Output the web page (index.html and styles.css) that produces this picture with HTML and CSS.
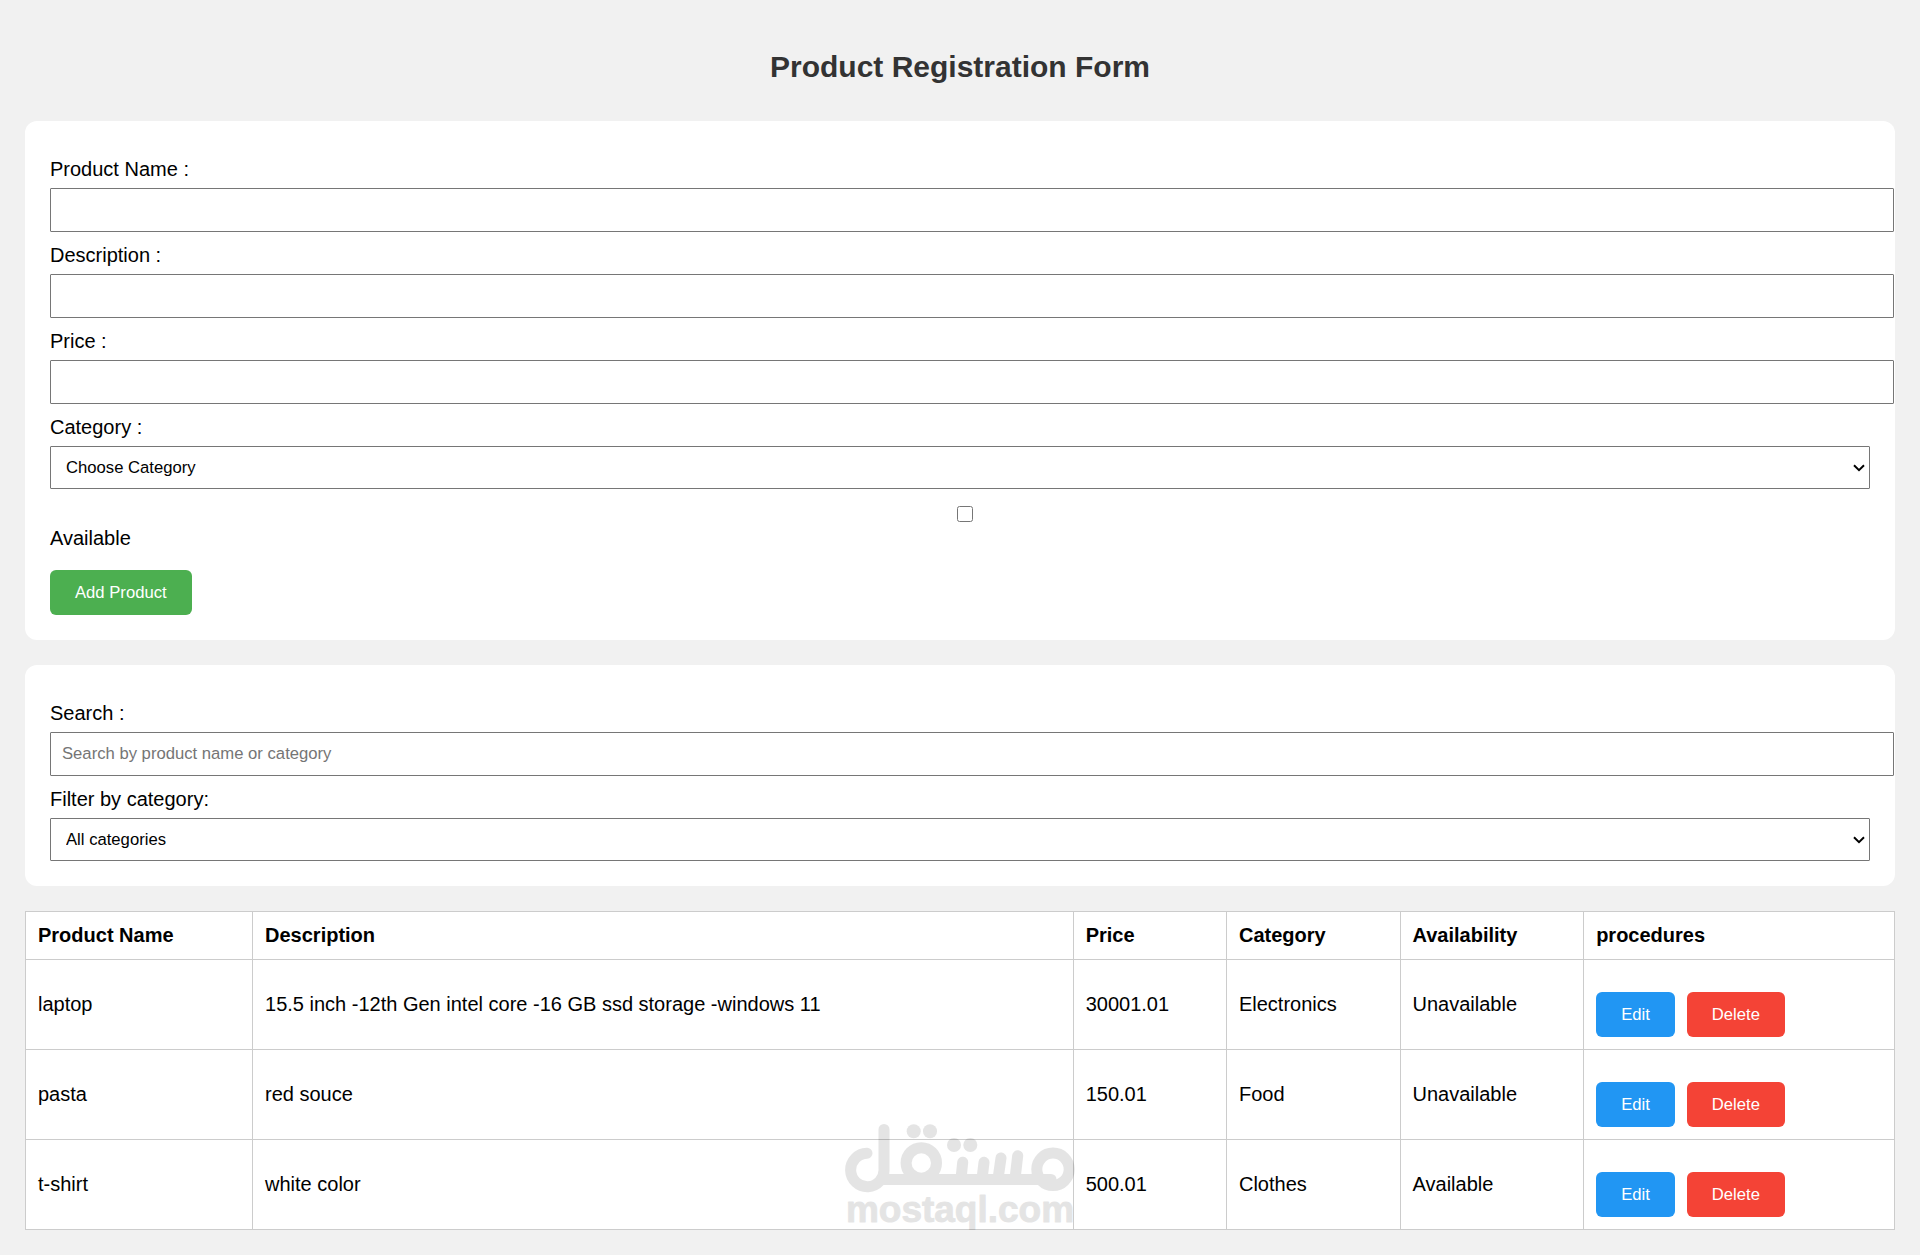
FILE: index.html
```html
<!DOCTYPE html>
<html lang="en">
<head>
    <meta charset="UTF-8">
    <meta name="viewport" content="width=device-width, initial-scale=1.0">
    <title>Product Registration Form</title>
    <link rel="stylesheet" href="styles.css">
</head>
<body>
    <h2>Product Registration Form</h2>

    <form id="productForm" class="card">
        <label for="productName">Product Name :</label>
        <input type="text" id="productName" name="productName" required>

        <label for="description">Description :</label>
        <input type="text" id="description" name="description" required>

        <label for="price">Price :</label>
        <input type="text" id="price" name="price" inputmode="decimal" required>

        <label for="category">Category :</label>
        <select id="category" name="category" required>
            <option value="">Choose Category</option>
            <option value="Electronics">Electronics</option>
            <option value="Food">Food</option>
            <option value="Clothes">Clothes</option>
        </select>

        <input type="checkbox" id="available" name="available">
        <label for="available" class="check-label">Available</label>

        <button type="submit" class="add-btn">Add Product</button>
    </form>

    <div class="card">
        <label for="search">Search :</label>
        <input type="text" id="search" placeholder="Search by product name or category">

        <label for="filterCategory">Filter by category:</label>
        <select id="filterCategory">
            <option value="">All categories</option>
            <option value="Electronics">Electronics</option>
            <option value="Food">Food</option>
            <option value="Clothes">Clothes</option>
        </select>
    </div>

    <div class="table-wrapper">
        <table id="productTable">
            <thead>
                <tr>
                    <th>Product Name</th>
                    <th>Description</th>
                    <th>Price</th>
                    <th>Category</th>
                    <th>Availability</th>
                    <th>procedures</th>
                </tr>
            </thead>
            <tbody>
                <tr>
                    <td>laptop</td>
                    <td>15.5 inch -12th Gen intel core -16 GB ssd storage -windows 11</td>
                    <td>30001.01</td>
                    <td>Electronics</td>
                    <td>Unavailable</td>
                    <td>
                        <div class="actions">
                            <button type="button" class="edit-btn">Edit</button>
                            <button type="button" class="delete-btn">Delete</button>
                        </div>
                    </td>
                </tr>
                <tr>
                    <td>pasta</td>
                    <td>red souce</td>
                    <td>150.01</td>
                    <td>Food</td>
                    <td>Unavailable</td>
                    <td>
                        <div class="actions">
                            <button type="button" class="edit-btn">Edit</button>
                            <button type="button" class="delete-btn">Delete</button>
                        </div>
                    </td>
                </tr>
                <tr>
                    <td>t-shirt</td>
                    <td>white color</td>
                    <td>500.01</td>
                    <td>Clothes</td>
                    <td>Available</td>
                    <td>
                        <div class="actions">
                            <button type="button" class="edit-btn">Edit</button>
                            <button type="button" class="delete-btn">Delete</button>
                        </div>
                    </td>
                </tr>
            </tbody>
        </table>

        <div class="watermark">
            <svg width="230" height="107" viewBox="0 0 230 107" role="img" aria-label="مستقل mostaql.com">
                <g class="mark-lines">
                    <path d="M39 6.5V46A16.7 16.7 0 1 1 22 30.3"/>
                    <path d="M38 56.5H206"/>
                    <circle cx="76.3" cy="40" r="15.2"/>
                    <circle cx="208" cy="46.3" r="16.2"/>
                    <path d="M117.7 39.3L116 56M139 39.3L137 56M156 35L153 56M172.7 32.7L170 56"/>
                </g>
                <g>
                    <circle cx="68.7" cy="8.3" r="7"/>
                    <circle cx="85" cy="8.3" r="7"/>
                    <circle cx="109" cy="22" r="7"/>
                    <circle cx="125.3" cy="22" r="7"/>
                </g>
                <text x="115" y="99" text-anchor="middle">mostaql.com</text>
            </svg>
        </div>
    </div>
</body>
</html>
```
FILE: styles.css
```css
* {
    box-sizing: border-box;
}

body {
    margin: 0;
    padding: 25px;
    background-color: #f1f1f1;
    color: #000;
    font-family: Arial, "Liberation Sans", sans-serif;
    font-size: 20px;
    line-height: 23px;
}

h2 {
    margin: 25px 0 37px;
    color: #333;
    font-size: 30px;
    line-height: 34px;
    text-align: center;
}

.card {
    margin-bottom: 25px;
    padding: 25px;
    background-color: #fff;
    border-radius: 12px;
}

label {
    display: block;
    margin: 12px 0 7px;
}

input,
select,
button {
    font-family: inherit;
    font-size: smaller;
}

input[type="text"] {
    /* the padding is added on top of the full width */
    box-sizing: content-box;
    display: block;
    width: 100%;
    padding: 11px;
    border: 1px solid #767676;
    border-radius: 1px;
    line-height: 20px;
}

select {
    appearance: none;
    display: block;
    width: 100%;
    height: 43px;
    padding: 0 25px 0 15px;
    border: 1px solid #767676;
    border-radius: 1px;
    background: #fff url("data:image/svg+xml,%3Csvg xmlns='http://www.w3.org/2000/svg' width='12' height='8'%3E%3Cpath d='M1 1.3L6 6.2L11 1.3' fill='none' stroke='%23000' stroke-width='2'/%3E%3C/svg%3E") no-repeat right 4px center;
    color: #000;
}

input[type="checkbox"] {
    display: block;
    width: 100%;
    height: 16px;
    margin: 17px 0 0 5px;
}

.check-label {
    margin: 5px 0 0;
}

button {
    margin-top: 20px;
    padding: 12px 25px;
    border: none;
    border-radius: 6px;
    color: #fff;
    line-height: 21px;
    cursor: pointer;
}

.add-btn {
    display: block;
    background-color: #4caf50;
}

.edit-btn {
    background-color: #2196f3;
}

.delete-btn {
    background-color: #f44336;
}

.table-wrapper {
    position: relative;
}

table {
    width: 100%;
    border-collapse: collapse;
    background-color: #fff;
}

th,
td {
    padding: 12px;
    border: 1px solid #ccc;
    text-align: left;
}

.actions {
    display: flex;
    gap: 12px;
    padding-right: 6px;
}

.watermark {
    position: absolute;
    right: 0;
    bottom: 0;
    left: 0;
    display: flex;
    justify-content: center;
    opacity: 0.1;
    pointer-events: none;
}

.mark-lines {
    fill: none;
    stroke: #000;
    stroke-width: 11;
    stroke-linecap: round;
}

.watermark text {
    stroke: #000;
    stroke-width: 1px;
    stroke-linejoin: round;
    font-size: 37px;
    font-weight: bold;
}
```
